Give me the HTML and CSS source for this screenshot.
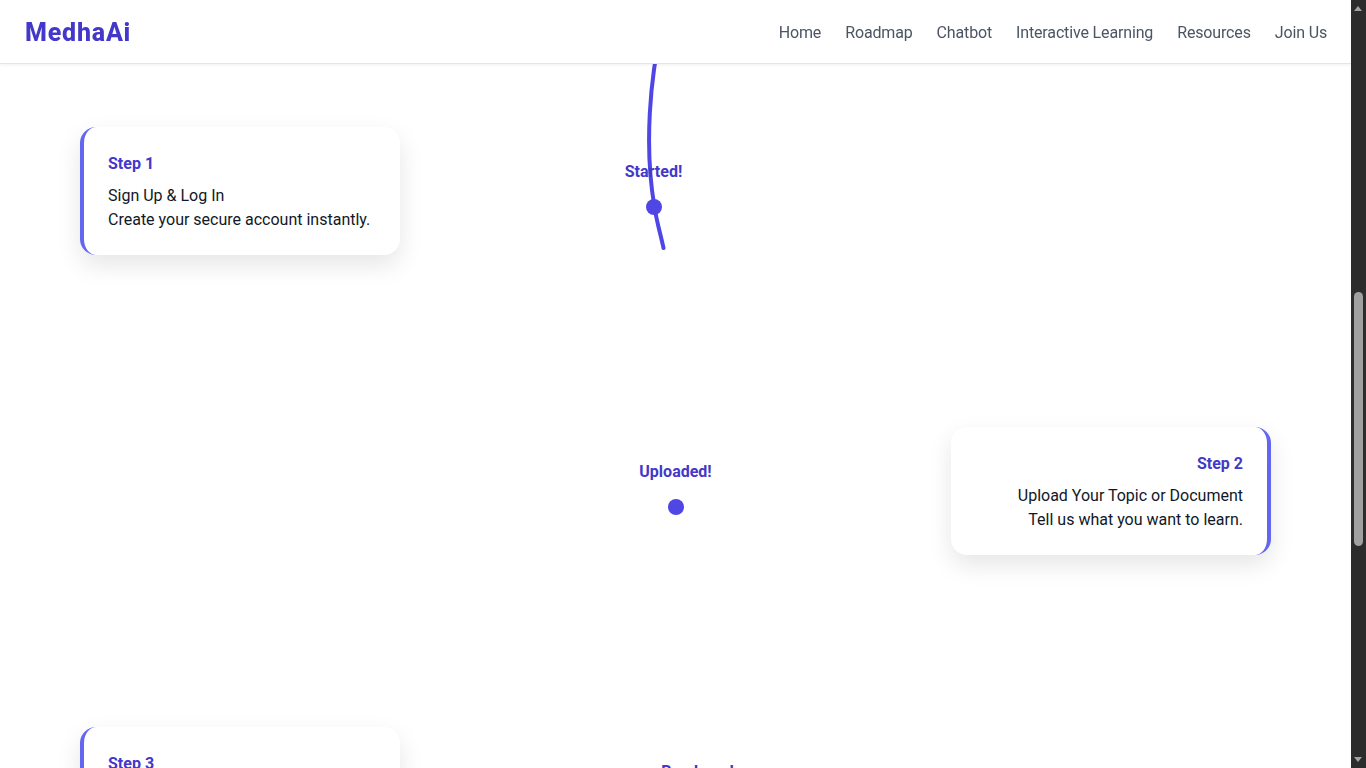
FILE: index.html
```html
<!DOCTYPE html>
<html lang="en">
<head>
<meta charset="utf-8">
<title>MedhaAi – Roadmap</title>
<link rel="stylesheet" href="styles.css">
</head>
<body>
<header class="topbar">
  <a class="logo" href="#">MedhaAi</a>
  <nav class="nav">
    <a href="#">Home</a>
    <a href="#">Roadmap</a>
    <a href="#">Chatbot</a>
    <a href="#">Interactive Learning</a>
    <a href="#">Resources</a>
    <a href="#">Join Us</a>
  </nav>
</header>
<main class="page">
  <section class="roadmap">
    <svg class="road-line" width="200" height="1000" viewBox="0 0 200 1000" aria-hidden="true">
      <path d="M86 0 C74 50 68 120 78.5 180 C80.5 194 84.5 207 87.5 221" fill="none" stroke="#4f46e5" stroke-width="4" stroke-linecap="round"/>
    </svg>
    <div class="step-row">
      <div class="card card-left">
        <div class="step-num">Step 1</div>
        <p class="step-text">Sign Up &amp; Log In</p>
        <p class="step-text">Create your secure account instantly.</p>
      </div>
      <div class="marker" style="transform: translateX(-22px)">
        <span class="marker-label">Started!</span>
        <span class="dot"></span>
      </div>
    </div>
    <div class="step-row">
      <div class="marker" style="transform: translateX(0px)">
        <span class="marker-label">Uploaded!</span>
        <span class="dot"></span>
      </div>
      <div class="card card-right">
        <div class="step-num">Step 2</div>
        <p class="step-text">Upload Your Topic or Document</p>
        <p class="step-text">Tell us what you want to learn.</p>
      </div>
    </div>
    <div class="step-row">
      <div class="card card-left">
        <div class="step-num">Step 3</div>
        <p class="step-text">Get Your Roadmap</p>
        <p class="step-text">AI builds a step-by-step learning path.</p>
      </div>
      <div class="marker" style="transform: translateX(22px)">
        <span class="marker-label">Roadmap!</span>
        <span class="dot"></span>
      </div>
    </div>
  </section>
</main>
<div class="scrollbar" aria-hidden="true">
  <span class="sb-arrow sb-up"></span>
  <span class="sb-thumb"></span>
  <span class="sb-arrow sb-down"></span>
</div>
</body>
</html>
```
FILE: styles.css
```css
html {
  background: #ffffff;
  scrollbar-width: none;
}
html::-webkit-scrollbar {
  display: none;
}

body {
  margin: 0 15px 0 0;
  font-family: "Segoe UI", Roboto, "Noto Sans", sans-serif;
  color: #111827;
  background: #ffffff;
}

/* window scrollbar (dark theme) */
.scrollbar {
  position: fixed;
  top: 0;
  right: 0;
  width: 15px;
  height: 100vh;
  z-index: 20;
  background: #2c2c2c;
}
.sb-arrow {
  position: absolute;
  left: 3px;
  width: 0;
  height: 0;
  border-left: 4.5px solid transparent;
  border-right: 4.5px solid transparent;
}
.sb-up {
  top: 6px;
  border-bottom: 5px solid #a3a3a3;
}
.sb-down {
  bottom: 6px;
  border-top: 5px solid #a3a3a3;
}
.sb-thumb {
  position: absolute;
  left: 3px;
  top: 292px;
  width: 9px;
  height: 254px;
  border-radius: 5px;
  background: #a0a0a0;
}

.topbar {
  position: fixed;
  top: 0;
  left: 0;
  right: 15px;
  z-index: 10;
  height: 64px;
  box-sizing: border-box;
  display: flex;
  align-items: center;
  justify-content: space-between;
  padding: 0 24px 0 25px;
  background: #ffffff;
  border-bottom: 1px solid #e5e5e5;
  box-shadow: 0 1px 3px rgba(0, 0, 0, 0.06);
}
.logo {
  font-size: 25px;
  font-weight: 800;
  color: #4338ca;
  text-decoration: none;
  letter-spacing: 0.8px;
  margin-top: 2px;
}
.nav {
  display: flex;
  gap: 24px;
  margin-top: 2px;
}
.nav a {
  font-size: 16px;
  letter-spacing: -0.15px;
  color: #4b5563;
  text-decoration: none;
}

.page {
  padding-top: 27px;
}

.roadmap {
  position: relative;
  padding: 100px 80px 60px;
}
.road-line {
  position: absolute;
  top: 0;
  left: 50%;
  margin-left: -100px;
  pointer-events: none;
}
.step-row {
  position: relative;
  display: grid;
  grid-template-columns: 320px 1fr 320px;
  height: 300px;
  align-items: start;
}
.card {
  background: #ffffff;
  border-radius: 16px;
  padding: 25px 24px 23px;
  box-shadow: 0 10px 24px rgba(0, 0, 0, 0.1);
}
.card-left {
  grid-column: 1;
  grid-row: 1;
  border-left: 4px solid #6366f1;
}
.card-right {
  grid-column: 3;
  grid-row: 1;
  border-right: 4px solid #6366f1;
  text-align: right;
}
.step-num {
  font-size: 16px;
  line-height: 24px;
  font-weight: 700;
  color: #4338ca;
  margin-bottom: 8px;
}
.step-text {
  margin: 0;
  font-size: 16px;
  line-height: 24px;
  color: #111827;
}

.marker {
  grid-column: 2;
  grid-row: 1;
  display: flex;
  flex-direction: column;
  align-items: center;
  gap: 15px;
  padding-top: 33px;
  position: relative;
  z-index: 1;
}
.marker-label {
  font-size: 16px;
  line-height: 24px;
  font-weight: 700;
  color: #4338ca;
}
.dot {
  width: 16px;
  height: 16px;
  border-radius: 50%;
  background: #4f46e5;
}
```
